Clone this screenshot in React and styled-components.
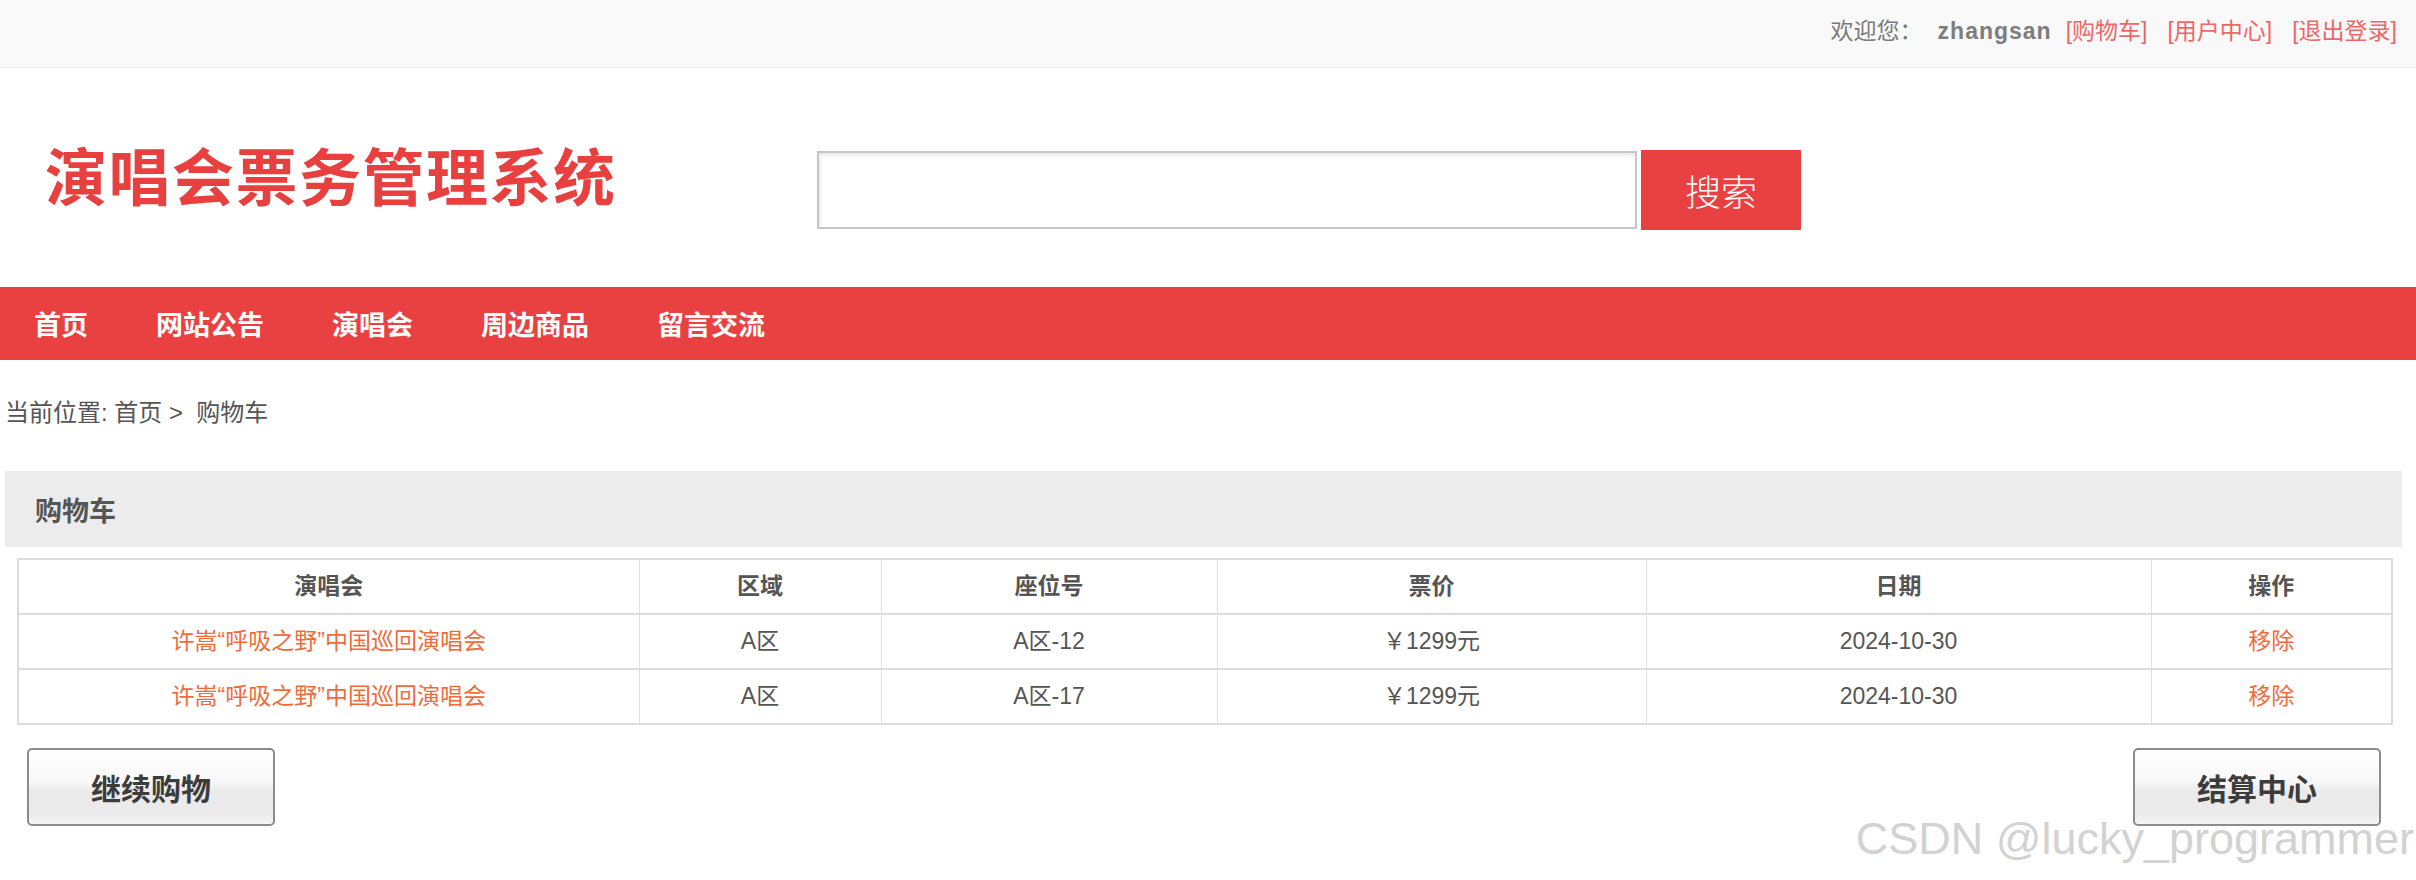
import React from "react";
import styled, { createGlobalStyle } from "styled-components";

const GlobalStyle = createGlobalStyle`
  html, body {
    margin: 0;
    padding: 0;
    background: #fff;
  }
  body {
    font-family: "Liberation Sans", "Noto Sans CJK SC", sans-serif;
    color: #555;
  }
  * {
    box-sizing: border-box;
  }
`;

const Page = styled.div`
  position: relative;
  width: 2416px;
  height: 880px;
  overflow: hidden;
`;

const TopBar = styled.div`
  height: 68px;
  background: #f9f9f9;
  border-bottom: 1px solid #efefef;
  display: flex;
  justify-content: flex-end;
  align-items: center;
  padding: 0 19px 4px 0;
  font-size: 23px;
  line-height: 1;
  color: #7a7a7a;
`;

const UserName = styled.b`
  margin: 0 14px 0 15px;
  letter-spacing: 1px;
  color: #7d7d7d;
`;

const TopLink = styled.a`
  color: #ef6666;
  text-decoration: none;
  margin-left: ${(p) => (p.$first ? "0" : "20px")};
`;

const Header = styled.header`
  height: 219px;
  display: flex;
  align-items: center;
  padding-left: 45px;
`;

const Logo = styled.h1`
  flex: 0 0 772px;
  margin: 5px 0 0;
  font-size: 62px;
  line-height: 1;
  letter-spacing: 1.5px;
  font-weight: bold;
  color: #e83f3f;
`;

const SearchForm = styled.form`
  display: flex;
  align-items: center;
  gap: 4px;
  margin-top: 24px;
`;

const SearchInput = styled.input`
  width: 820px;
  height: 78px;
  border: 2px solid #c6c6c6;
  box-shadow: inset 3px 4px 3px -1px #ececec;
  outline: none;
  padding: 0 12px;
  font-size: 24px;
`;

const SearchButton = styled.button`
  width: 160px;
  height: 80px;
  border: none;
  background: #e94141;
  color: #fff;
  font-family: inherit;
  font-size: 36px;
  font-weight: 300;
  cursor: pointer;
`;

const Nav = styled.nav`
  height: 73px;
  background: #e94141;
  display: flex;
  align-items: center;
`;

const NavItem = styled.a`
  padding: 0 ${(p) => (p.$first ? "34px 0 34px" : "34px")};
  color: #fff;
  font-size: 27px;
  font-weight: bold;
  text-decoration: none;
`;

const Breadcrumb = styled.div`
  padding: 36px 0 0 5px;
  font-size: 24px;
  line-height: 34px;
  color: #555;
`;

const Panel = styled.section`
  margin: 41px 14px 0 5px;
`;

const PanelHeader = styled.h2`
  margin: 0;
  height: 76px;
  background: #ececec;
  display: flex;
  align-items: center;
  padding-left: 30px;
  font-size: 27px;
  font-weight: bold;
  color: #555;
`;

const TableWrap = styled.div`
  padding: 11px 11px 0 12px;
`;

const CartTable = styled.table`
  width: 100%;
  border-collapse: collapse;
  table-layout: fixed;
  border: 2px solid #dcdcdc;
  font-size: 23px;
  line-height: 1;
  color: #555;

  th,
  td {
    height: 55px;
    padding: 0;
    text-align: center;
    border-top: 2px solid #dcdcdc;
    border-bottom: 2px solid #dcdcdc;
    border-left: 1px solid #e0e0e0;
    border-right: 1px solid #e0e0e0;
  }

  th {
    font-weight: bold;
  }
`;

const OrangeLink = styled.a`
  color: #ef6c3a;
  text-decoration: none;
`;

const ButtonRow = styled.div`
  display: flex;
  justify-content: space-between;
  padding: 23px 10px 0;
`;

const GlossButton = styled.button`
  width: 248px;
  height: 78px;
  border: 2px solid #8c8c8c;
  border-radius: 5px;
  background: linear-gradient(
    #fefefe 0%,
    #f8f8f8 42%,
    #eaeaea 56%,
    #ebebeb 86%,
    #f5f5f5 100%
  );
  font-family: inherit;
  font-size: 30px;
  font-weight: bold;
  color: #3c3c3c;
  cursor: pointer;
`;

const Watermark = styled.div`
  position: absolute;
  right: 2px;
  top: 813px;
  font-size: 45px;
  color: #d2d2d2;
  text-shadow: 0 0 1px #fff, 1px 1px 0 #fff;
  pointer-events: none;
  white-space: nowrap;
`;

const columns = [621, 242, 336, 429, 505, 241];

const items = [
  { name: "许嵩“呼吸之野”中国巡回演唱会", area: "A区", seat: "A区-12", price: "￥1299元", date: "2024-10-30" },
  { name: "许嵩“呼吸之野”中国巡回演唱会", area: "A区", seat: "A区-17", price: "￥1299元", date: "2024-10-30" },
];

const navs = ["首页", "网站公告", "演唱会", "周边商品", "留言交流"];

export default function App() {
  return (
    <Page>
      <GlobalStyle />
      <TopBar>
        <span>欢迎您：</span>
        <UserName>zhangsan</UserName>
        <TopLink href="#" $first>[购物车]</TopLink>
        <TopLink href="#">[用户中心]</TopLink>
        <TopLink href="#">[退出登录]</TopLink>
      </TopBar>

      <Header>
        <Logo>演唱会票务管理系统</Logo>
        <SearchForm onSubmit={(e) => e.preventDefault()}>
          <SearchInput type="text" />
          <SearchButton type="submit">搜索</SearchButton>
        </SearchForm>
      </Header>

      <Nav>
        {navs.map((n, i) => (
          <NavItem href="#" key={n} $first={i === 0}>
            {n}
          </NavItem>
        ))}
      </Nav>

      <Breadcrumb>当前位置: 首页 &gt;&nbsp; 购物车</Breadcrumb>

      <Panel>
        <PanelHeader>购物车</PanelHeader>
        <TableWrap>
          <CartTable>
            <colgroup>
              {columns.map((w, i) => (
                <col key={i} style={{ width: w }} />
              ))}
            </colgroup>
            <thead>
              <tr>
                <th>演唱会</th>
                <th>区域</th>
                <th>座位号</th>
                <th>票价</th>
                <th>日期</th>
                <th>操作</th>
              </tr>
            </thead>
            <tbody>
              {items.map((it) => (
                <tr key={it.seat}>
                  <td>
                    <OrangeLink href="#">{it.name}</OrangeLink>
                  </td>
                  <td>{it.area}</td>
                  <td>{it.seat}</td>
                  <td>{it.price}</td>
                  <td>{it.date}</td>
                  <td>
                    <OrangeLink href="#">移除</OrangeLink>
                  </td>
                </tr>
              ))}
            </tbody>
          </CartTable>
          <ButtonRow>
            <GlossButton>继续购物</GlossButton>
            <GlossButton>结算中心</GlossButton>
          </ButtonRow>
        </TableWrap>
      </Panel>

      <Watermark>CSDN @lucky_programmer</Watermark>
    </Page>
  );
}
